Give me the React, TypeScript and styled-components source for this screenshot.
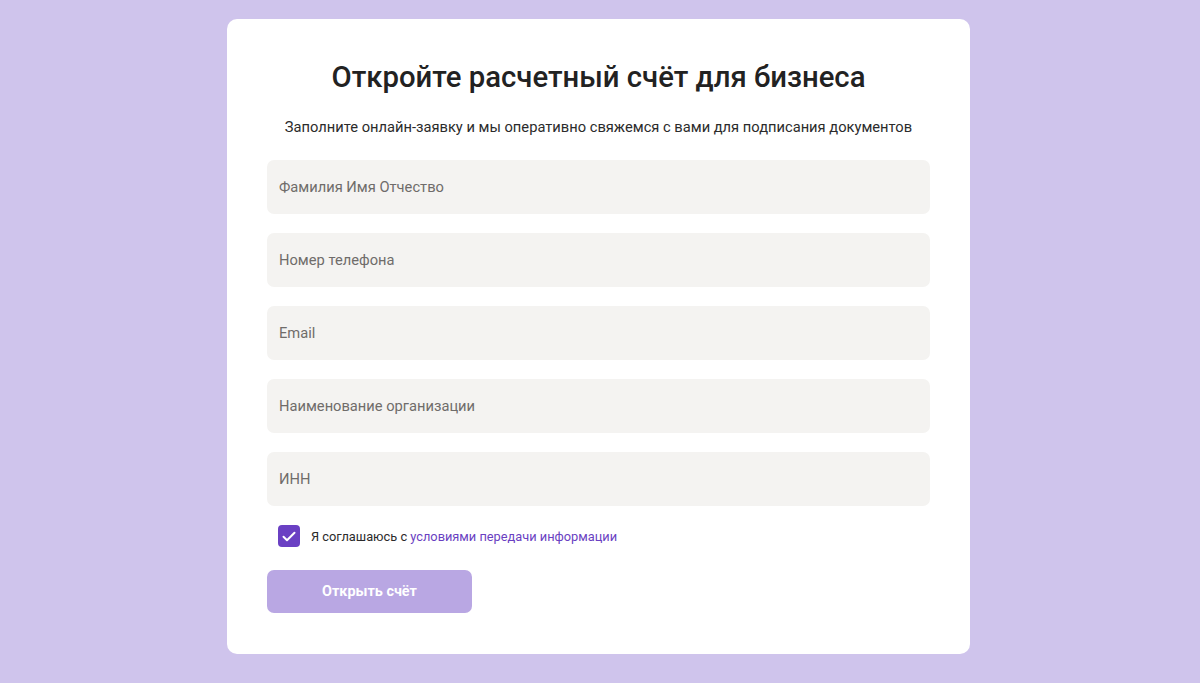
import React, { useState } from 'react'
import styled, { createGlobalStyle } from 'styled-components'

const GlobalStyle = createGlobalStyle`
    html, body {
        margin: 0;
        padding: 0;
        height: 100%;
    }
    body {
        background: #cfc4ec;
        font-family: Roboto, "Liberation Sans", Arial, sans-serif;
    }
    * {
        box-sizing: border-box;
    }
`

const Page = styled.div`
    min-height: 683px;
    display: flex;
    justify-content: center;
    padding: 19px 3px 0 0;
`

const Card = styled.form`
    width: 743px;
    height: 635px;
    background: #ffffff;
    border-radius: 10px;
    padding: 40px;
    display: flex;
    flex-direction: column;
`

const Title = styled.h1`
    margin: 0;
    font-size: 29.3px;
    line-height: 36px;
    font-weight: 500;
    color: #222222;
    text-align: center;
`

const Subtitle = styled.p`
    margin: 22px 0 23px;
    font-size: 14.7px;
    line-height: 20px;
    color: #2b2b2b;
    text-align: center;
`

const Fields = styled.div`
    display: flex;
    flex-direction: column;
    gap: 19px;
`

const Input = styled.input`
    width: 100%;
    height: 54px;
    border: none;
    border-radius: 7px;
    background: #f4f3f1;
    padding: 0 12px;
    font-family: inherit;
    font-size: 14.7px;
    color: #222;
    outline: none;

    &::placeholder {
        color: #6f6c6a;
    }
`

const Agreement = styled.label`
    display: flex;
    align-items: center;
    gap: 11px;
    margin: 19px 0 23px 11px;
    font-size: 12.8px;
    color: #2b2b2b;
    cursor: pointer;

    a {
        color: #6a3fc2;
        text-decoration: none;
    }
`

const Box = styled.span<{ $checked: boolean }>`
    width: 22px;
    height: 22px;
    border-radius: 4px;
    background: ${(props) => (props.$checked ? '#6a40c3' : '#ffffff')};
    border: ${(props) => (props.$checked ? 'none' : '1px solid #b9b9b9')};
    display: flex;
    align-items: center;
    justify-content: center;
`

const Submit = styled.button`
    width: 205px;
    height: 43px;
    border: none;
    border-radius: 7px;
    background: #b9a7e3;
    color: #ffffff;
    font-family: inherit;
    font-size: 14.4px;
    font-weight: 700;
    cursor: pointer;
`

const fields = [
    'Фамилия Имя Отчество',
    'Номер телефона',
    'Email',
    'Наименование организации',
    'ИНН',
]

const App = () => {
    const [agreed, setAgreed] = useState(true)

    return (
        <>
            <GlobalStyle />
            <Page>
                <Card onSubmit={(e) => e.preventDefault()}>
                    <Title>Откройте расчетный счёт для бизнеса</Title>
                    <Subtitle>
                        Заполните онлайн-заявку и мы оперативно свяжемся с вами для подписания документов
                    </Subtitle>
                    <Fields>
                        {fields.map((placeholder) => (
                            <Input key={placeholder} placeholder={placeholder} />
                        ))}
                    </Fields>
                    <Agreement onClick={() => setAgreed(!agreed)}>
                        <Box $checked={agreed}>
                            {agreed && (
                                <svg width="14" height="11" viewBox="0 0 14 11" fill="none">
                                    <path d="M1.5 5.8 L5 9.2 L12.5 1.8" stroke="#ffffff" strokeWidth="2" strokeLinecap="round" strokeLinejoin="round" />
                                </svg>
                            )}
                        </Box>
                        <span>
                            Я соглашаюсь с <a href="#" onClick={(e) => e.preventDefault()}>условиями передачи информации</a>
                        </span>
                    </Agreement>
                    <Submit type="submit">Открыть счёт</Submit>
                </Card>
            </Page>
        </>
    )
}

export default App
